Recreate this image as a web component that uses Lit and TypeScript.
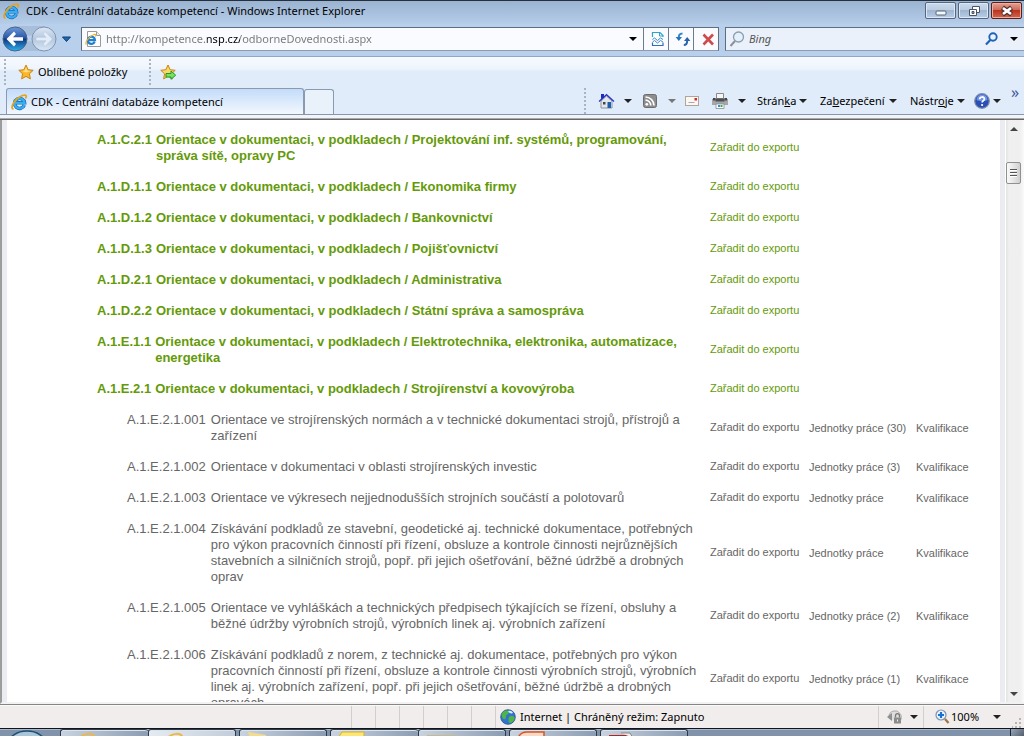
import { LitElement, html, svg, css, nothing, TemplateResult } from "lit";
import { customElement, property } from "lit/decorators.js";
import { classMap } from "lit/directives/class-map.js";

interface Skill {
  code: string;
  title: string;
  sub?: boolean;
  units?: string;
}

const BASE = "Orientace v dokumentaci, v podkladech / ";

const SKILLS: Skill[] = [
  { code: "A.1.C.2.1", title: BASE + "Projektování inf. systémů, programování, správa sítě, opravy PC" },
  { code: "A.1.D.1.1", title: BASE + "Ekonomika firmy" },
  { code: "A.1.D.1.2", title: BASE + "Bankovnictví" },
  { code: "A.1.D.1.3", title: BASE + "Pojišťovnictví" },
  { code: "A.1.D.2.1", title: BASE + "Administrativa" },
  { code: "A.1.D.2.2", title: BASE + "Státní správa a samospráva" },
  { code: "A.1.E.1.1", title: BASE + "Elektrotechnika, elektronika, automatizace, energetika" },
  { code: "A.1.E.2.1", title: BASE + "Strojírenství a kovovýroba" },
  { code: "A.1.E.2.1.001", title: "Orientace ve strojírenských normách a v technické dokumentaci strojů, přístrojů a zařízení", sub: true, units: "Jednotky práce (30)" },
  { code: "A.1.E.2.1.002", title: "Orientace v dokumentaci v oblasti strojírenských investic", sub: true, units: "Jednotky práce (3)" },
  { code: "A.1.E.2.1.003", title: "Orientace ve výkresech nejjednodušších strojních součástí a polotovarů", sub: true, units: "Jednotky práce" },
  { code: "A.1.E.2.1.004", title: "Získávání podkladů ze stavební, geodetické aj. technické dokumentace, potřebných pro výkon pracovních činností při řízení, obsluze a kontrole činnosti nejrůznějších stavebních a silničních strojů, popř. při jejich ošetřování, běžné údržbě a drobných oprav", sub: true, units: "Jednotky práce" },
  { code: "A.1.E.2.1.005", title: "Orientace ve vyhláškách a technických předpisech týkajících se řízení, obsluhy a běžné údržby výrobních strojů, výrobních linek aj. výrobních zařízení", sub: true, units: "Jednotky práce (2)" },
  { code: "A.1.E.2.1.006", title: "Získávání podkladů z norem, z technické aj. dokumentace, potřebných pro výkon pracovních činností při řízení, obsluze a kontrole činnosti výrobních strojů, výrobních linek aj. výrobních zařízení, popř. při jejich ošetřování, běžné údržbě a drobných opravách", sub: true, units: "Jednotky práce (1)" },
];

const STAR = "M8 1l2.1 4.7 5.1.6-3.8 3.5 1 5.1L8 12.400 3.600 14.900l1-5.100L.8 6.300l5.100-.6z";

const SHAPES: Record<string, TemplateResult> = {
  ie: svg`
    <path d="M13.300 11.200A5 5 0 1 1 13.600 8.800H4.500" fill="none" stroke="#1668b8" stroke-width="3.400"/>
    <path d="M13.300 11.200A5 5 0 1 1 13.600 8.800H4.500" fill="none" stroke="#36aef0" stroke-width="2.200"/>
    <path d="M2.500 15C-1.500 14.500 3 5 11.500 1.500c4-1.300 4.500.5 3 3" fill="none" stroke="#e8a31a" stroke-width="1.800"/>`,
  page: svg`
    <path d="M2.500.5h9l4 4v11h-13z" fill="#fff" stroke="#9a9a9a"/>
    <path d="M11.500.5v4h4" fill="#eee" stroke="#9a9a9a"/>
    <path d="M9.700 10.800A3.600 3.600 0 1 1 10 9.200H3.500" fill="none" stroke="#1f7fd0" stroke-width="2.200"/>
    <path d="M1.500 13.500C-.5 12 4 5 9 3.500c2-.5 2 .8 1.500 2" fill="none" stroke="#f0b429" stroke-width="1.300"/>`,
  star: svg`<path d=${STAR} fill="#fdb62b" stroke="#c98512"/><path d="M8 3l1.300 3.500 3.500.5L8 8.500 4 7l2.700-.5z" fill="#ffe08a"/>`,
  starAdd: svg`<path d=${STAR} fill="#fcd667" stroke="#c98512"/>
    <path d="M6 9.500h5V7l4.700 4.200L11 15.300V13H6z" fill="#7be05a" stroke="#1d9a2a"/>`,
  house: svg`
    <path d="M3 8l5.500-5L14 8v7H3z" fill="#e3e6ea" stroke="#8e949c"/>
    <path d="M1 8.500L8.500 1.700 16 8.500" fill="none" stroke="#2b36c4" stroke-width="1.300"/>
    <path d="M3 1h3v3L3 6z" fill="#1b2cc0"/>
    <path d="M9.500 9h3.500v6H9.500z" fill="#1e5fae"/><path d="M5 9h2.500v2.500H5z" fill="#444"/>`,
  rss: svg`
    <rect x="1.500" y="1.500" width="13" height="13" rx="2" fill="#8d8d8d" stroke="#6d6d6d"/>
    <circle cx="4.800" cy="11.300" r="1.400" fill="#fff"/>
    <path d="M3.500 7.200a5.300 5.300 0 0 1 5.300 5.300M3.500 4a8.500 8.500 0 0 1 8.500 8.500" fill="none" stroke="#fff" stroke-width="1.700"/>`,
  mail: svg`
    <rect x="1.500" y="3.500" width="13" height="9" fill="#fbf7f3" stroke="#b0a49c"/>
    <path d="M10.500 5h2.500v2.500h-2.500z" fill="#d8262c"/><path d="M4.500 9.500h6" stroke="#a9a9a9"/>`,
  printer: svg`
    <path d="M4.500 .5h7v5h-7z" fill="#f6f6f6" stroke="#8a8a8a"/>
    <path d="M0 6h16v6H0z" fill="#a3a6aa"/><path d="M1 5h2.500v2.500H1zM12.500 5H15v2.500h-2.500z" fill="#444"/>
    <path d="M3.500 5.500h9v3h-9z" fill="#4d4f52"/>
    <path d="M4 11h8v4.500H4z" fill="#fff" stroke="#8a8a8a" stroke-width=".8"/>
    <path d="M6 12h2v2H6z" fill="#2496d8"/><path d="M8.500 12h2v2h-2z" fill="#33a857"/>`,
  help: svg`
    <circle cx="8" cy="8" r="7.300" fill="#2a4fb4" stroke="#7f8ca8" stroke-width="1.200"/>
    <path d="M2.500 7a5.500 5.500 0 0 1 11 0c-3 1.500-8 1.500-11 0z" fill="#6f95e6"/>
    <path d="M5.700 6.300C5.700 3.200 10.400 3.300 10.400 6c0 1.800-2.300 1.700-2.300 3.600" fill="none" stroke="#fff" stroke-width="1.700"/>
    <circle cx="8.100" cy="12" r="1.100" fill="#fff"/>`,
  compat: svg`
    <path d="M2.500 6V1.500h7.500l3 3V6" fill="#fff" stroke="#2fa5cc" stroke-width="1.200"/>
    <path d="M2.500 11.500v3h10.500v-3" fill="none" stroke="#2f6fb8" stroke-width="1.200"/>
    <path d="M9.500 1.500V5H13" fill="none" stroke="#2fa5cc"/>
    <path d="M2.500 8.500l2-1.500 3 2.500 3-2.500 2.500 1.500M2.500 11l2-1.500 3 2.500 3-2.500L13 11" fill="none" stroke="#3f8ac6"/>`,
  refresh: svg`
    <path d="M7.500 2.500C4.500 2.500 3.800 4 3.800 7" fill="none" stroke="#2f86d0" stroke-width="2"/><path d="M.6 6h6.400L3.800 10z" fill="#2672c0"/>
    <path d="M8.800 14c2.700 0 3.400-1.500 3.400-4.500" fill="none" stroke="#2c66b0" stroke-width="2"/><path d="M9 10h6.400L12.200 6z" fill="#2b62ac"/>`,
  stop: svg`<path d="M3.500 3.500l9.500 10M13 3.500l-9.500 10" stroke="#cf4b4b" stroke-width="2.600"/>`,
  lens: svg`
    <circle cx="9.500" cy="6" r="5" fill="#e4f0fa" stroke="#8c9db0" stroke-width="1.300"/>
    <path d="M6 10l-4.500 5" stroke="#8a929c" stroke-width="2"/>`,
  lensBlue: svg`
    <circle cx="9" cy="6" r="3.700" fill="#eaf4ff" stroke="#1f63b8" stroke-width="1.900"/>
    <path d="M6.300 9L2 13.500" stroke="#1f63b8" stroke-width="2.200"/>`,
  globe: svg`
    <circle cx="8" cy="8" r="7.300" fill="#2f74d0" stroke="#24508f" stroke-width=".8"/>
    <path d="M2 4.500C4 1 8 1 9 2.500S8 5 6.500 6 7 9 5 10 1 8 2 4.500zM9.500 7.500c2-1.500 4.500-.5 5 1s-1.500 5-4 5.500-2.500-5-1-6.500z" fill="#4fb547"/>
    <path d="M8 2c2-.8 4 0 5 2-1.500 1-3.500.5-5-2z" fill="#d9f0ff"/>`,
  lock: svg`
    <path d="M2 8a6 6 0 0 1 11-3.500A6 6 0 0 1 10 14" fill="#dedede" stroke="#ababab"/>
    <path d="M0 8l5-4v8z" fill="#8f8f8f"/><path d="M8.500 8.500V6.800c0-3 4-3 4 0v1.700" fill="none" stroke="#777" stroke-width="1.300"/>
    <path d="M7 8.500h7v6H7z" fill="#8b8b8b"/><path d="M10 10.500h1v2h-1z" fill="#eee"/>`,
  zoom: svg`
    <circle cx="6" cy="6" r="5" fill="#e8f3ff" stroke="#7c93ad" stroke-width="1.200"/>
    <path d="M6 3v6M3 6h6" stroke="#1f6fd0" stroke-width="2.200"/><path d="M10 10l3.500 4" stroke="#a0724a" stroke-width="2.200"/>`,
};

@customElement("ui-icon")
class UiIcon extends LitElement {
  @property() name = "ie";
  static styles = css`
    :host { display: block; flex: none; width: 16px; height: 16px; }
    svg { display: block; width: 16px; height: 16px; overflow: visible; }
  `;
  render() {
    return html`<svg viewBox="0 0 16 16" aria-hidden="true">${SHAPES[this.name]}</svg>`;
  }
}

@customElement("title-bar")
class TitleBar extends LitElement {
  static styles = css`
    :host { display: flex; align-items: flex-start; height: 24px; box-sizing: border-box; border-top: 1px solid #26303c;
      padding: 1px 2px 0 3px; background: linear-gradient(#9ab3d1, #b5cde9); }
    .caption { flex: 1; display: flex; align-items: center; gap: 7px; height: 18px; white-space: nowrap; color: #000; }
    .buttons { display: flex; gap: 2px; }
    button { width: 31px; height: 17px; padding: 0; border: 1px solid #54657d; border-radius: 2px;
      background: linear-gradient(#cbdaec, #bccde2 45%, #9fb5d0 50%, #b9cfe8); box-shadow: inset 0 0 0 1px #dce8f5; }
    .close { background: linear-gradient(#e3a295, #d06a58 45%, #b8351f 50%, #d4664c); border-color: #5c2018; box-shadow: inset 0 0 0 1px #e9b1a5; }
    svg { display: block; margin: auto; width: 14px; height: 12px; }
  `;
  render() {
    return html`
      <div class="caption"><ui-icon name="ie"></ui-icon><span>CDK - Centrální databáze kompetencí - Windows Internet Explorer</span></div>
      <div class="buttons">
        <button aria-label="Minimalizovat"><svg viewBox="0 0 14 12"><rect x="2" y="6" width="10" height="4" rx="1" fill="#f5f8fb" stroke="#566478"/></svg></button>
        <button aria-label="Obnovit"><svg viewBox="0 0 14 12"><path d="M5.500 1.500h7v6h-7z" fill="#fff" stroke="#4a5568"/><path d="M2.500 4.500h7v6h-7z" fill="#fff" stroke="#4a5568"/><path d="M5 6.500h2v2H5z" fill="#8fa6c4" stroke="#4a5568"/></svg></button>
        <button class="close" aria-label="Zavřít"><svg viewBox="0 0 14 12"><path d="M2.500 2.500l9 7M11.500 2.500l-9 7" stroke="#4e3030" stroke-width="4.800"/><path d="M3 3l8 6M11 3L3 9" stroke="#fff" stroke-width="2.800"/></svg></button>
      </div>`;
  }
}

@customElement("nav-bar")
class NavBar extends LitElement {
  static styles = css`
    :host { display: flex; align-items: center; height: 29px; padding: 0 0 3px 2px; background: #b9d0ec; }
    button { border: 0; padding: 0; background: none; display: grid; place-items: center; font: inherit; color: #000; }
    .travel { display: flex; width: 79px; align-items: center; }
    .travel svg { display: block; width: 74px; height: 28px; }
    .box { display: flex; align-items: center; height: 24px; box-sizing: border-box; border: 1px solid #5f6d80;
      border-bottom-color: #8c9cb2; background: #f9fbfe; }
    .address { flex: 636 1 0; }
    .search { flex: 295 1 0; margin-left: 6px; background: #eaf1fa; padding-left: 3px; gap: 4px; border-right: 0; }
    .address ui-icon { margin-left: 3px; }
    input { flex: 1; min-width: 0; border: 0; padding: 0; outline: 0; background: none; font: inherit; height: 20px; }
    .url { margin-left: 5px; color: transparent; -webkit-background-clip: text; background-clip: text;
      background-image: linear-gradient(90deg, #777 0 101px, #000 101px 134px, #777 134px); }
    .search input { font-style: italic; color: #555; }
    .search input::placeholder { color: #555; }
    .cell { width: 25px; height: 22px; border-left: 1px solid #6d7b8e; box-sizing: border-box; }
    .drop { width: 20px; height: 22px; }
    .drop::before { content: ""; border: 4px solid transparent; border-top-color: #000; border-bottom: 0; }
  `;
  render() {
    return html`
      <div class="travel">
        <button aria-label="Zpět / Vpřed">
          <svg viewBox="0 0 74 28">
            <defs>
              <linearGradient id="b" x2="0" y2="1"><stop offset="0" stop-color="#6d9ad8"/><stop offset=".45" stop-color="#2a58a8"/><stop offset=".5" stop-color="#12357e"/><stop offset="1" stop-color="#2bb2f0"/></linearGradient>
              <linearGradient id="f" x2="0" y2="1"><stop offset="0" stop-color="#dce7f4"/><stop offset=".5" stop-color="#b3c8e0"/><stop offset="1" stop-color="#dae8f6"/></linearGradient>
            </defs>
            <path d="M13 1h30v6c-10 5-20 5-30 0zM13 26h30v-6c-10-5-20-5-30 0z" fill="#a7bfdb"/>
            <circle cx="13" cy="14" r="12" fill="url(#b)" stroke="#4b6488"/>
            <circle cx="42" cy="14" r="12" fill="url(#f)" stroke="#7f93ad"/>
            <path d="M12 6.500L4.500 14l7.500 7.500 2-2.500-3-3.200H21v-3.600H11l3-3.200z" fill="#fff"/>
            <path d="M43 6.500l7.500 7.500-7.500 7.500-2-2.500 3-3.200H34v-3.600h10l-3-3.200z" fill="#e4edf7" stroke="#b9c9dc" stroke-width=".7"/>
            <path d="M60.500 12h8l-4 4.500z" fill="#1c6ab0" stroke="#123f78"/>
          </svg>
        </button>
      </div>
      <div class="box address">
        <ui-icon name="page"></ui-icon>
        <input class="url" aria-label="Adresa" value="http://kompetence.nsp.cz/odborneDovednosti.aspx" />
        <button class="drop" aria-label="Historie adres"></button>
        <button class="cell" aria-label="Kompatibilní zobrazení"><ui-icon name="compat"></ui-icon></button>
        <button class="cell" aria-label="Aktualizovat"><ui-icon name="refresh"></ui-icon></button>
        <button class="cell" aria-label="Zastavit"><ui-icon name="stop"></ui-icon></button>
      </div>
      <div class="box search">
        <ui-icon name="lens"></ui-icon>
        <input aria-label="Hledat" placeholder="Bing" />
        <button aria-label="Hledat"><ui-icon name="lensBlue"></ui-icon></button>
        <button class="drop" aria-label="Možnosti hledání"></button>
      </div>`;
  }
}

@customElement("tool-bars")
class ToolBars extends LitElement {
  static styles = css`
    :host { display: block; border-top: 1px solid #8fa6c4; background: linear-gradient(#f7faff, #eef4fc 12px, #e0ecf9 14px); }
    button { border: 0; padding: 0; background: none; font: inherit; color: #000; display: flex; align-items: center; white-space: nowrap; }
    .grip { flex: none; width: 2px; height: 26px; background: repeating-linear-gradient(#a9b4c2 0 2px, transparent 2px 4px); }
    .favorites { display: flex; align-items: center; height: 30px; padding-left: 4px; }
    .favorites .fav { width: 143px; padding-left: 12px; gap: 4px; box-sizing: border-box; }
    .favorites .add { margin-left: 9px; }
    .tabs { display: flex; align-items: flex-end; height: 27px; padding-left: 6px; border-bottom: 1px solid #8596ad; }
    .tab { width: 298px; height: 26px; box-sizing: border-box; padding-left: 4px; gap: 4px; border: 1px solid #8a9ab0; border-bottom: 0;
      border-radius: 3px 3px 0 0; background: linear-gradient(#c3dcfa, #e9f2fd 80%, #f4f8fe); }
    .new { width: 30px; height: 25px; box-sizing: border-box; border: 1px solid #8a9ab0; border-bottom: 0; border-radius: 3px 3px 0 0; background: #e9f1fb; }
    .commands { margin-left: auto; display: flex; align-items: center; height: 26px; align-self: center; }
    .commands button { box-sizing: border-box; }
    .arrow::after { content: ""; border: 4px solid transparent; border-top-color: #222; border-bottom: 0; }
    .dim::after { border-top-color: #777; }
    .wide { gap: 10px; width: 42px; }
    .home { margin-left: 12px; width: 44px; }
    .mail { width: 28px; }
    .print { width: 45px; }
    .menu { gap: 3px; justify-content: space-between; }
    .m1 { width: 50px; }
    .m2 { width: 77px; margin-left: 13px; }
    .m3 { width: 55px; margin-left: 13px; }
    .help { margin-left: 9px; width: 27px; gap: 3px; margin-right: 10px; }
    .more { width: 13px; height: 26px; align-items: flex-start; color: #3f57a0; font-size: 16px; line-height: 8px; }
    .edge { height: 3px; background: #f1f4f9; border-bottom: 1px solid #aaa; }
    .dark { height: 1px; background: #666; }
  `;
  render() {
    return html`
      <div class="favorites">
        <span class="grip"></span>
        <button class="fav"><ui-icon name="star"></ui-icon>Oblíbené položky</button>
        <span class="grip"></span>
        <button class="add" aria-label="Přidat na panel Oblíbené položky"><ui-icon name="starAdd"></ui-icon></button>
      </div>
      <div class="tabs">
        <button class="tab"><ui-icon name="ie"></ui-icon>CDK - Centrální databáze kompetencí</button>
        <button class="new" aria-label="Nová karta"></button>
        <div class="commands">
          <span class="grip"></span>
          <button class="wide arrow home" aria-label="Domů"><ui-icon name="house"></ui-icon></button>
          <button class="wide arrow dim" aria-label="Informační kanály"><ui-icon name="rss"></ui-icon></button>
          <button class="mail" aria-label="Číst poštu"><ui-icon name="mail"></ui-icon></button>
          <button class="wide arrow print" aria-label="Tisk"><ui-icon name="printer"></ui-icon></button>
          <button class="menu arrow m1"><span>Strán<u>k</u>a</span></button>
          <button class="menu arrow m2"><span>Za<u>b</u>ezpečení</span></button>
          <button class="menu arrow m3"><span>Nástr<u>o</u>je</span></button>
          <button class="arrow help" aria-label="Nápověda"><ui-icon name="help"></ui-icon></button>
          <button class="more" aria-label="Další příkazy">»</button>
        </div>
      </div>
      <div class="edge"></div>
      <div class="dark"></div>`;
  }
}

@customElement("skill-list")
class SkillList extends LitElement {
  static styles = css`
    :host { display: block; font-family: "Liberation Sans", Arial, sans-serif; padding: 11px 0 0 90px; }
    table { width: 100%; border-collapse: collapse; table-layout: fixed; }
    .cTitle { width: 613px; }
    .cExport { width: 99px; }
    .cUnits { width: 107px; }
    td { padding: 0 0 15px; vertical-align: middle; font-size: 11px; line-height: 16px; white-space: nowrap; color: #666; }
    .title { padding: 1px 0 14px; font-size: 13px; white-space: normal; }
    .lower { padding: 1px 0 14px; }
    .entry { display: flex; gap: 4px; padding-right: 10px; }
    .code { flex: none; }
    .group .title { font-weight: bold; }
    .group td { color: #649a08; }
    .sub .entry { padding-left: 30px; gap: 5px; }
    a { color: inherit; text-decoration: none; }
  `;
  render() {
    return html`
      <table>
        <colgroup><col class="cTitle" /><col class="cExport" /><col class="cUnits" /><col /></colgroup>
        <tbody>
          ${SKILLS.map((s) => html`
            <tr class=${classMap({ group: !s.sub, sub: !!s.sub })}>
              <td class="title"><div class="entry"><span class="code">${s.code}</span><a href="#">${s.title}</a></div></td>
              <td><a href="#">Zařadit do exportu</a></td>
              <td class="lower">${s.units ? html`<a href="#">${s.units}</a>` : nothing}</td>
              <td class="lower">${s.sub ? html`<a href="#">Kvalifikace</a>` : nothing}</td>
            </tr>`)}
        </tbody>
      </table>`;
  }
}

@customElement("scroll-rail")
class ScrollRail extends LitElement {
  static styles = css`
    :host { display: flex; flex-direction: column; width: 18px; background: linear-gradient(90deg, #e3e3e3, #f0f0f0 3px, #efefef 14px, #fafafa); }
    button { border: 0; padding: 0; width: 16px; height: 17px; background: none; display: grid; place-items: center; }
    .up::before { content: ""; border: 4px solid transparent; border-bottom-color: #444; border-top: 0; }
    .down::before { content: ""; border: 4px solid transparent; border-top-color: #444; border-bottom: 0; }
    .track { flex: 1; padding-top: 25px; }
    .thumb { box-sizing: border-box; width: 15px; height: 22px; border: 1px solid #909090; border-radius: 2px;
      background: linear-gradient(90deg, #fafafa, #e6e6e6 50%, #cfcfcf); display: grid; place-items: center; }
    .lines { width: 7px; height: 8px; background: repeating-linear-gradient(#555 0 1px, #fff 1px 2px, transparent 2px 3px); }
  `;
  render() {
    return html`
      <button class="up" aria-label="Nahoru"></button>
      <div class="track"><div class="thumb"><span class="lines"></span></div></div>
      <button class="down" aria-label="Dolů"></button>`;
  }
}

@customElement("status-bar")
class StatusBar extends LitElement {
  static styles = css`
    :host { display: flex; align-items: stretch; height: 22px; border-top: 1px solid #858585; background: #f0edec;
      box-shadow: inset 0 1px #fbfafa; padding-top: 1px; }
    .message { flex: 351 1 0; }
    .pane { width: 24px; box-sizing: border-box; border-left: 1px solid #d3cfcd; }
    .zone { flex: 378 1 0; display: flex; align-items: center; gap: 4px; padding-left: 4px; border-left: 1px solid #d3cfcd; white-space: nowrap; }
    button { border: 0; padding: 0; background: none; font: inherit; color: #000; display: flex; align-items: center;
      border-left: 1px solid #d3cfcd; box-sizing: border-box; }
    button::after { content: ""; border: 4px solid transparent; border-top-color: #222; border-bottom: 0; }
    .protect { width: 45px; padding-left: 8px; gap: 7px; }
    .zoom { width: 78px; padding-left: 11px; }
    .zoom span { width: 43px; text-align: left; }
    .size { width: 23px; align-self: flex-end; }
    svg { display: block; width: 10px; height: 10px; margin-left: 11px; }
  `;
  render() {
    return html`
      <span class="message"></span>
      ${Array.from({ length: 6 }, () => html`<span class="pane"></span>`)}
      <div class="zone"><ui-icon name="globe"></ui-icon><span>Internet | Chráněný režim: Zapnuto</span></div>
      <button class="protect" aria-label="Zabezpečení zóny"><ui-icon name="lock"></ui-icon></button>
      <button class="zoom"><ui-icon name="zoom"></ui-icon><span>100%</span></button>
      <span class="size"><svg viewBox="0 0 10 10"><path d="M7 0h2v2H7zM7 4h2v2H7zM7 8h2v2H7zM3 4h2v2H3zM3 8h2v2H3zM0 8h1v2H0z" fill="#b9b4b1"/></svg></span>`;
  }
}

const TASKS = [
  { icon: "clip", join: true },
  { icon: "clip", light: true },
  { icon: "folder" },
  { icon: "yellow", join: true },
  { icon: "tan" },
  { icon: "orange" },
  { icon: "red" },
];

const TASK_ICONS: Record<string, TemplateResult> = {
  clip: svg`<path d="M10 7c6-5 14-6 16 0" fill="none" stroke="#f0b840" stroke-width="2"/>`,
  folder: svg`<path d="M0 1l18 3v3H2z" fill="#f4dc8c"/>`,
  yellow: svg`<path d="M3 1h22v6H-1z" fill="#fbe678" stroke="#e0b020"/>`,
  tan: svg`<path d="M0 4h30v3H0z" fill="#c9b98f"/>`,
  orange: svg`<path d="M0 7c2-5 6-6 9-6h17v6z" fill="#f7d9c4" stroke="#d8542a" stroke-width="1.500"/>`,
  red: svg`<path d="M0 4h20v3H0z" fill="#b02424"/><path d="M12 2h9l3 5" fill="#eee" stroke="#888"/>`,
};

@customElement("task-bar")
class TaskBar extends LitElement {
  static styles = css`
    :host { display: flex; height: 7px; overflow: hidden; border-top: 1px solid #10151c; background: #8093ab; box-shadow: inset 0 1px #a9b8ca; }
    button { flex: none; border: 0; padding: 0; background: none; overflow: hidden; height: 9px; }
    .start { width: 60px; }
    .task { width: 88px; margin-right: 3px; border: 1px solid #2d3a4a; border-bottom: 0; border-radius: 3px 3px 0 0; box-sizing: border-box;
      background: linear-gradient(90deg, #c9d3df, #8b9cb3); text-align: left; box-shadow: inset 0 1px #dbe3ec; }
    .join { margin-right: 0; border-right: 0; }
    .light { background: linear-gradient(90deg, #e6ebf1, #c2cdda); }
    .task svg { display: block; margin-left: 8px; width: 32px; height: 7px; }
    .start svg { display: block; width: 60px; height: 8px; }
    .desktop { width: 14px; margin-left: auto; background: linear-gradient(135deg, #9aa7b8, #4a5668); border-left: 1px solid #1d2733; }
  `;
  render() {
    return html`
      <button class="start" aria-label="Start"><svg viewBox="0 0 60 8"><ellipse cx="27" cy="13" rx="18" ry="12" fill="#a9c6d8" stroke="#1f4f74" stroke-width="1.500"/></svg></button>
      ${TASKS.map((t) => html`
        <button class=${classMap({ task: true, join: !!t.join, light: !!t.light })} aria-label="Okno"><svg viewBox="0 0 32 7">${TASK_ICONS[t.icon]}</svg></button>`)}
      <button class="desktop" aria-label="Zobrazit plochu"></button>`;
  }
}

@customElement("app-root")
class AppRoot extends LitElement {
  static styles = css`
    :host { display: flex; flex-direction: column; height: 100vh; overflow: hidden; background: #fff; color: #000;
      font: 11px/16px "Noto Sans", "Open Sans", sans-serif; }
    title-bar, nav-bar, tool-bars, status-bar, task-bar { flex: none; }
    .view { flex: 1; min-height: 0; display: flex; border-left: 2px solid #9c9c9c; border-bottom: 2px solid #f2f2f2; }
    .page { flex: 1; min-width: 0; overflow: hidden; border-left: 5px solid #ebecf2; border-right: 5px solid #ebecf2; }
    scroll-rail { margin-left: 1px; }
  `;
  render() {
    return html`
      <title-bar></title-bar>
      <nav-bar></nav-bar>
      <tool-bars></tool-bars>
      <main class="view">
        <div class="page"><skill-list></skill-list></div>
        <scroll-rail></scroll-rail>
      </main>
      <status-bar></status-bar>
      <task-bar></task-bar>`;
  }
}
